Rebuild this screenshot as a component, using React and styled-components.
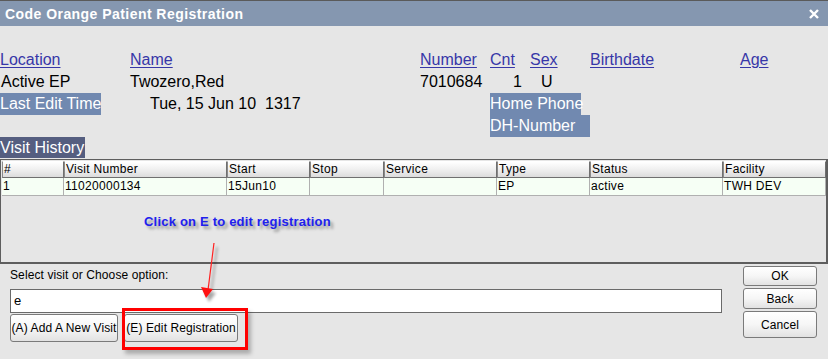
import React from "react";
import styled, { createGlobalStyle } from "styled-components";

const Global = createGlobalStyle`
  html, body { margin: 0; padding: 0; background: #e6e6e6; }
  body { font-family: "Liberation Sans", Arial, sans-serif; }
  * { box-sizing: border-box; }
`;

const Window = styled.div`
  position: relative;
  width: 828px;
  height: 359px;
  background: #e6e6e6;
  overflow: hidden;
  display: flex;
  flex-direction: column;
`;

const TitleBar = styled.div`
  height: 26px;
  border-top: 1px solid #5a5a5a;
  background: #8597b0;
  display: flex;
  align-items: center;
  justify-content: space-between;
  padding: 0 9px 0 5px;
  color: #fff;
  font-weight: bold;
  font-size: 14px;
  letter-spacing: 0.45px;
`;

const InfoGrid = styled.div`
  margin-top: 23px;
  display: grid;
  grid-template-columns: 130px 290px 70px 40px 60px 150px 1fr;
  grid-auto-rows: 22px;
  font-size: 16px;
  line-height: 22px;
  color: #000;
`;

const Label = styled.span`
  color: #3737a8;
  text-decoration: underline;
  text-underline-offset: 2px;
  white-space: nowrap;
`;

const Value = styled.span`
  white-space: nowrap;
  padding-left: ${(p) => p.$pl || 0}px;
  grid-column: ${(p) => p.$col || "auto"};
`;

const Tag = styled.span`
  justify-self: start;
  background: #7189b0;
  color: #fff;
  white-space: nowrap;
  width: ${(p) => (p.$w ? p.$w + "px" : "auto")};
  grid-column: ${(p) => p.$col || "auto"};
`;

const SectionTag = styled.div`
  align-self: flex-start;
  background: #555e80;
  color: #fff;
  font-size: 16px;
  line-height: 21px;
  height: 21px;
  padding-right: 1px;
`;

const Table = styled.div`
  margin-top: 1px;
  height: 105px;
  border: 1px solid #5e5e5e;
  border-right-width: 2px;
  border-bottom-width: 2px;
  background: #e6e6e6;
  display: flex;
  flex-direction: column;
  padding: 1px 0 0 1px;
  font-size: 12px;
  letter-spacing: 0.3px;
`;

const cols = "62px 163px 83px 74px 113px 93px 133px 1fr";

const HeadRow = styled.div`
  display: grid;
  grid-template-columns: ${cols};
  height: 17px;
`;

const HeadCell = styled.div`
  background: linear-gradient(#ffffff, #ececec 60%, #dcdcdc);
  border-left: 1px solid #8a8a8a;
  border-right: 1px solid #6f6f6f;
  border-bottom: 1px solid #6f6f6f;
  border-top: 1px solid #fff;
  padding-left: 1px;
  line-height: 15px;
  color: #000;
  white-space: nowrap;
  overflow: hidden;
`;

const DataRow = styled.div`
  display: grid;
  grid-template-columns: ${cols};
  height: 18px;
  background: #f6fff5;
  border-bottom: 1px solid #b0b0b0;
`;

const DataCell = styled.div`
  border-right: 1px solid #b0b0b0;
  padding-left: 1px;
  line-height: 17px;
  color: #000;
  white-space: nowrap;
`;

const Bottom = styled.div`
  display: flex;
  padding: 2px 10px 0 10px;
  gap: 21px;
`;

const LeftCol = styled.div`
  flex: 1;
  display: flex;
  flex-direction: column;
`;

const Prompt = styled.div`
  margin-top: 2px;
  font-size: 12px;
  line-height: 15px;
  color: #000;
  letter-spacing: 0.1px;
`;

const Input = styled.div`
  margin-top: 6px;
  height: 24px;
  background: #fff;
  border: 1px solid #6a6a6a;
  font-size: 13px;
  line-height: 21px;
  padding-left: 3px;
`;

const ButtonRow = styled.div`
  margin-top: 1px;
  display: flex;
  gap: 6px;
`;

const Button = styled.div`
  position: relative;
  height: ${(p) => p.$h || 28}px;
  width: ${(p) => p.$w}px;
  border: 1px solid #7a7a7a;
  border-radius: 3px;
  background: linear-gradient(#ffffff, #f6f6f6 50%, #e2e2e2);
  font-size: 12px;
  color: #000;
  display: flex;
  align-items: center;
  justify-content: center;
  white-space: nowrap;
  padding: 0 2px;
  letter-spacing: 0.1px;
`;

const RightCol = styled.div`
  width: 74px;
  display: flex;
  flex-direction: column;
  gap: 2px;
  margin-right: 1px;
`;

const Highlight = styled.div`
  position: absolute;
  left: -3px;
  top: -7px;
  right: -11px;
  bottom: -9px;
  border: 3px solid #ff0000;
  box-shadow: 3px 4px 4px rgba(0, 0, 0, 0.25);
  pointer-events: none;
`;

const Callout = styled.div`
  position: absolute;
  left: 144px;
  top: 214px;
  font-size: 13px;
  font-weight: bold;
  color: #2020ee;
  letter-spacing: 0.2px;
  text-shadow: 3px 3px 3px rgba(0, 0, 0, 0.35);
  white-space: nowrap;
`;

const Arrow = styled.svg`
  position: absolute;
  left: 196px;
  top: 240px;
  overflow: visible;
`;

export default function App() {
  return (
    <>
      <Global />
      <Window>
        <TitleBar>
          <span>Code Orange Patient Registration</span>
          <svg width="10" height="10" viewBox="0 0 10 10">
            <path d="M1 1 L9 9 M9 1 L1 9" stroke="#fff" strokeWidth="2.4" />
          </svg>
        </TitleBar>

        <InfoGrid>
          <Label>Location</Label>
          <Label>Name</Label>
          <Label>Number</Label>
          <Label>Cnt</Label>
          <Label>Sex</Label>
          <Label>Birthdate</Label>
          <Label>Age</Label>

          <Value $pl={1}>Active EP</Value>
          <Value>Twozero,Red</Value>
          <Value>7010684</Value>
          <Value $pl={23}>1</Value>
          <Value $pl={11}>U</Value>
          <Value $col="6 / 8" />

          <Tag>Last Edit Time</Tag>
          <Value $pl={20} $col="2 / 4">Tue, 15 Jun 10&nbsp;&nbsp;1317</Value>
          <Tag $col="4 / 7" $w={91}>Home Phone</Tag>
          <Value $col="7 / 8" />

          <Value $col="1 / 4" />
          <Tag $col="4 / 7" $w={100}>DH-Number</Tag>
        </InfoGrid>

        <SectionTag>Visit History</SectionTag>

        <Table>
          <HeadRow>
            <HeadCell>#</HeadCell>
            <HeadCell>Visit Number</HeadCell>
            <HeadCell>Start</HeadCell>
            <HeadCell>Stop</HeadCell>
            <HeadCell>Service</HeadCell>
            <HeadCell>Type</HeadCell>
            <HeadCell>Status</HeadCell>
            <HeadCell>Facility</HeadCell>
          </HeadRow>
          <DataRow>
            <DataCell>1</DataCell>
            <DataCell>11020000134</DataCell>
            <DataCell>15Jun10</DataCell>
            <DataCell />
            <DataCell />
            <DataCell>EP</DataCell>
            <DataCell>active</DataCell>
            <DataCell>TWH DEV</DataCell>
          </DataRow>
        </Table>

        <Bottom>
          <LeftCol>
            <Prompt>Select visit or Choose option:</Prompt>
            <Input>e</Input>
            <ButtonRow>
              <Button $w={108}>(A) Add A New Visit</Button>
              <Button $w={114}>
                (E) Edit Registration
                <Highlight />
              </Button>
            </ButtonRow>
          </LeftCol>
          <RightCol>
            <Button $w={74} $h={20}>OK</Button>
            <Button $w={74} $h={21}>Back</Button>
            <Button $w={74} $h={27}>Cancel</Button>
          </RightCol>
        </Bottom>

        <Callout>Click on E to edit registration</Callout>
        <Arrow width="30" height="70" viewBox="0 0 30 70">
          <defs>
            <filter id="sh" x="-50%" y="-50%" width="200%" height="200%">
              <feGaussianBlur stdDeviation="1.5" />
            </filter>
          </defs>
          <g transform="translate(3,4)" opacity="0.35" filter="url(#sh)">
            <path d="M18 3 L12 50" stroke="#000" strokeWidth="1.5" />
            <path d="M5 47 L10 58 L17 49 Z" fill="#000" />
          </g>
          <path d="M18 3 L12 50" stroke="#ff2020" strokeWidth="1.2" />
          <path d="M5 47 L10 58 L17 49 Z" fill="#ff1010" />
        </Arrow>
      </Window>
    </>
  );
}
